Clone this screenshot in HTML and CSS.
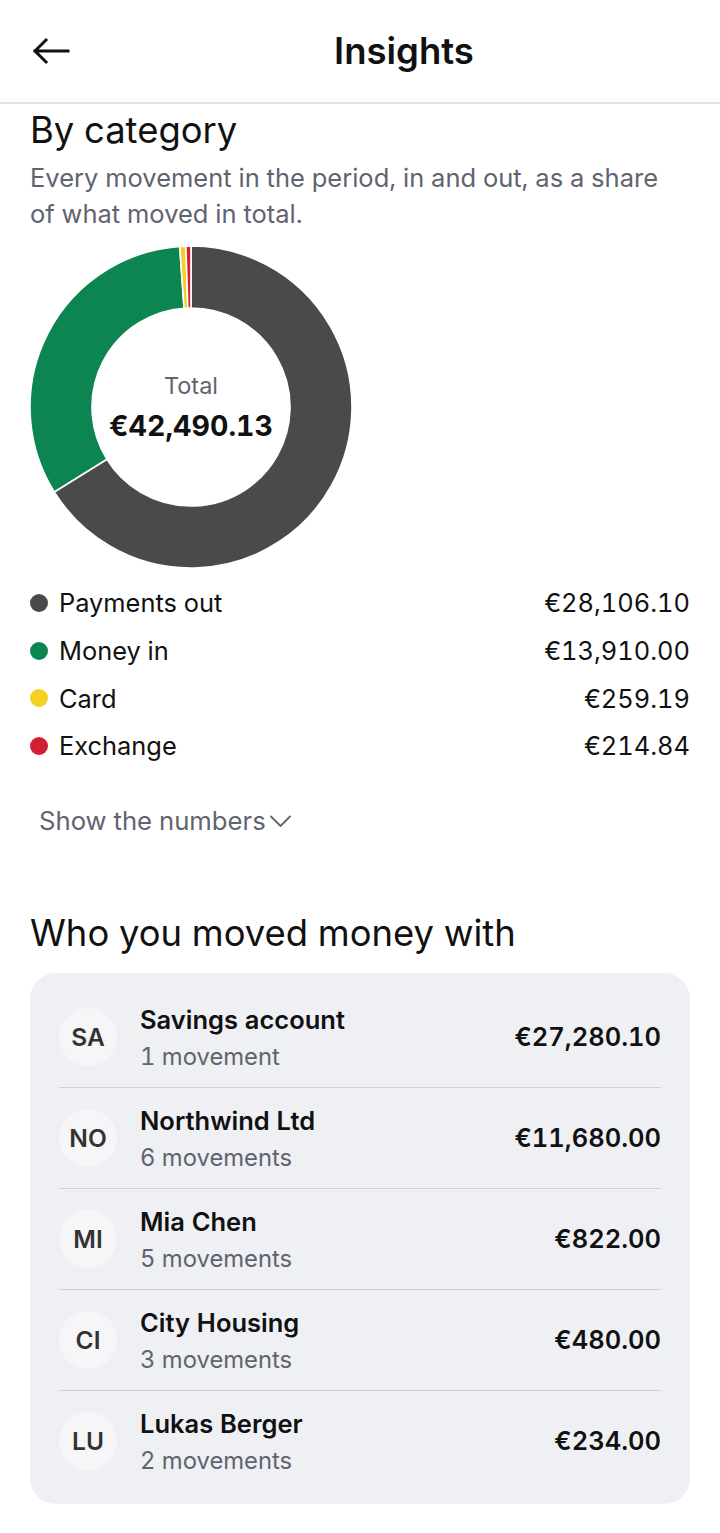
FILE: index.html
```html
<!DOCTYPE html>
<html lang="en">
<head>
<meta charset="utf-8">
<title>Insights</title>
<link rel="stylesheet" href="styles.css">
</head>
<body>
<header class="topbar">
  <button class="back" aria-label="Back">
    <svg width="40" height="30" viewBox="0 0 40 30" fill="none" stroke="#111" stroke-width="3" stroke-linecap="square" stroke-linejoin="miter"><path d="M37 15H4M15 4L4 15l11 11"/></svg>
  </button>
  <h1 class="title">Insights</h1>
</header>
<main class="content">
  <section class="category">
    <h2 class="heading">By category</h2>
    <p class="sub">Every movement in the period, in and out, as a share of what moved in total.</p>
    <div class="donut">
      <svg width="324" height="324" viewBox="-1 -1 324 324">
        <g stroke="#fff" stroke-width="1.6" stroke-linejoin="miter">
          <path fill="#4a4a4a" d="M161 0 A161 161 0 1 1 24.26 245.99 L76.92 213.26 A99 99 0 1 0 161 62 Z"/>
          <path fill="#0c8552" d="M24.26 245.99 A161 161 0 0 1 149.71 0.40 L154.06 62.24 A99 99 0 0 0 76.92 213.26 Z"/>
          <path fill="#f4d11e" d="M149.71 0.40 A161 161 0 0 1 155.88 0.08 L157.85 62.05 A99 99 0 0 0 154.06 62.24 Z"/>
          <path fill="#d21f33" d="M155.88 0.08 A161 161 0 0 1 161 0 L161 62 A99 99 0 0 0 157.85 62.05 Z"/>
        </g>
      </svg>
      <div class="donut-center">
        <span class="donut-label">Total</span>
        <span class="donut-value">€42,490.13</span>
      </div>
    </div>
    <ul class="legend">
      <li class="legend-row"><span class="dot dot-out"></span><span class="legend-name">Payments out</span><span class="legend-val">€28,106.10</span></li>
      <li class="legend-row"><span class="dot dot-in"></span><span class="legend-name">Money in</span><span class="legend-val">€13,910.00</span></li>
      <li class="legend-row"><span class="dot dot-card"></span><span class="legend-name">Card</span><span class="legend-val">€259.19</span></li>
      <li class="legend-row"><span class="dot dot-ex"></span><span class="legend-name">Exchange</span><span class="legend-val">€214.84</span></li>
    </ul>
    <button class="toggle">Show the numbers<svg width="22" height="14" viewBox="0 0 22 14" fill="none" stroke="#5f6470" stroke-width="1.8" stroke-linecap="round" stroke-linejoin="round"><path d="M2 2.5l9.5 9.5 9.5-9.5"/></svg></button>
  </section>

  <section class="people">
    <h2 class="heading">Who you moved money with</h2>
    <ul class="card">
      <li class="row"><span class="avatar">SA</span><div class="info"><span class="name">Savings account</span><span class="count">1 movement</span></div><span class="amount">€27,280.10</span></li>
      <li class="row"><span class="avatar">NO</span><div class="info"><span class="name">Northwind Ltd</span><span class="count">6 movements</span></div><span class="amount">€11,680.00</span></li>
      <li class="row"><span class="avatar">MI</span><div class="info"><span class="name">Mia Chen</span><span class="count">5 movements</span></div><span class="amount">€822.00</span></li>
      <li class="row"><span class="avatar">CI</span><div class="info"><span class="name">City Housing</span><span class="count">3 movements</span></div><span class="amount">€480.00</span></li>
      <li class="row"><span class="avatar">LU</span><div class="info"><span class="name">Lukas Berger</span><span class="count">2 movements</span></div><span class="amount">€234.00</span></li>
    </ul>
  </section>
</main>
</body>
</html>
```
FILE: styles.css
```css
* { box-sizing: border-box; }
html, body { margin: 0; padding: 0; background: #fff; }
body {
  font-family: Inter, "Noto Sans", "Liberation Sans", sans-serif;
  font-variant-numeric: tabular-nums;
  color: #111;
  width: 720px;
}
ul { list-style: none; margin: 0; padding: 0; }
button { font: inherit; background: none; border: 0; padding: 0; cursor: pointer; }

.topbar {
  height: 104px;
  display: flex;
  align-items: center;
  border-bottom: 2px solid #e3e3e5;
}
.back {
  width: 88px;
  height: 60px;
  display: flex;
  align-items: center;
  padding-left: 31px;
}
.title {
  flex: 1;
  margin: 0;
  text-align: center;
  font-size: 36.5px;
  font-weight: 600;
  line-height: 40px;
}

.content { padding: 0 30px; }

.heading {
  margin: 0;
  font-size: 36.4px;
  font-weight: 400;
  line-height: 40px;
}
.category .heading { margin-top: 6px; }

.sub {
  margin: 10px 0 0;
  max-width: 645px;
  font-size: 25.5px;
  line-height: 36px;
  color: #5f6470;
}

.donut {
  position: relative;
  width: 324px;
  height: 324px;
  margin: 13px 0 0 -1px;
}
.donut svg { display: block; }
.donut-center {
  position: absolute;
  inset: 0;
  display: flex;
  flex-direction: column;
  align-items: center;
  justify-content: center;
  padding-top: 4px;
}
.donut-label {
  font-size: 23.5px;
  line-height: 30px;
  color: #5f6470;
}
.donut-value {
  margin-top: 4px;
  font-size: 28.5px;
  font-weight: 700;
  line-height: 42px;
  color: #111;
}

.legend { margin-top: 10px; }
.legend-row {
  display: flex;
  align-items: center;
  height: 47.7px;
  font-size: 25.4px;
}
.dot {
  width: 18px;
  height: 18px;
  border-radius: 50%;
  margin-right: 11px;
  flex: none;
}
.dot-out { background: #4a4a4a; }
.dot-in { background: #0c8552; }
.dot-card { background: #f4d11e; }
.dot-ex { background: #d21f33; }
.legend-name { flex: 1; }
.legend-val { text-align: right; }

.toggle {
  margin-top: 33px;
  margin-left: 9px;
  display: flex;
  align-items: center;
  gap: 3px;
  font-size: 25.7px;
  line-height: 36px;
  color: #5f6470;
}

.people { margin-top: 74px; }
.card {
  margin-top: 20px;
  background: #eef0f4;
  border-radius: 26px;
  padding: 14px 29px 13px;
}
.row {
  display: flex;
  align-items: center;
  height: 101px;
  border-top: 1px solid #cfd2d8;
}
.row:first-child { border-top: 0; height: 100px; }
.avatar {
  width: 58px;
  height: 58px;
  border-radius: 50%;
  background: #f6f6f8;
  display: flex;
  align-items: center;
  justify-content: center;
  font-size: 24.5px;
  font-weight: 600;
  color: #333;
  flex: none;
}
.info {
  flex: 1;
  display: flex;
  flex-direction: column;
  margin-left: 23px;
  padding-top: 4px;
  gap: 3px;
}
.name {
  font-size: 25.5px;
  font-weight: 600;
  line-height: 34px;
}
.count {
  font-size: 23.8px;
  line-height: 34px;
  color: #5f6470;
}
.amount {
  font-size: 25.5px;
  font-weight: 600;
}
```
